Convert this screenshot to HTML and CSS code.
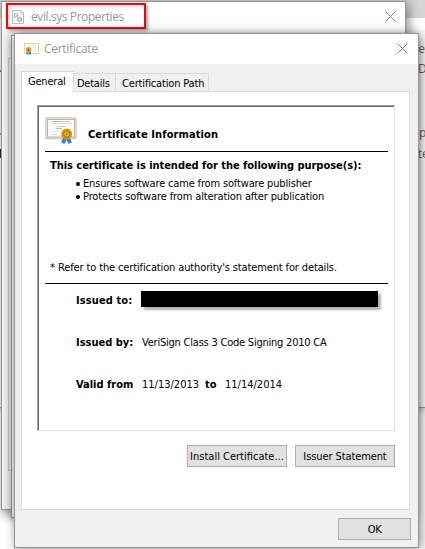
FILE: index.html
```html
<!DOCTYPE html>
<html lang="en">
<head>
<meta charset="utf-8">
<title>Certificate</title>
<link rel="stylesheet" href="styles.css">
</head>
<body>
<div class="desktop">
  <div class="backdrop">
    <div class="backdrop-bar"></div>
    <div class="peek peek-a">te</div>
    <div class="peek peek-b">D</div>
    <div class="peek peek-c">p</div>
    <div class="peek peek-d">ate</div>
    <i class="edge-mark blue"></i><i class="edge-mark green"></i><i class="edge-mark dark"></i>
  </div>

  <section class="window properties">
    <header class="titlebar">
      <svg class="file-icon" viewBox="0 0 12 14">
        <path d="M.5.5H9L11.5 3v10.500H.5z" fill="#f6f6f6" stroke="#bbb"/>
        <path d="M9 .5V3h2.500" fill="none" stroke="#bbb"/>
        <circle cx="3.800" cy="5.500" r="1.700" fill="#e4e6e8" stroke="#a3abb3" stroke-width="1.300" stroke-dasharray="1.300 .4"/>
        <circle cx="7.500" cy="9.300" r="1.900" fill="#e4e6e8" stroke="#a3abb3" stroke-width="1.500" stroke-dasharray="1.500 .4"/>
      </svg>
      <span class="props-title">evil.sys Properties</span>
      <svg class="close" viewBox="0 0 11 11"><path d="M.5.5l10 10M10.500.5l-10 10"/></svg>
    </header>
    <div class="props-page"></div>
    <div class="highlight"></div>
  </section>

  <section class="window signature"></section>

  <section class="window certificate">
    <header class="titlebar">
      <svg class="cert-small" viewBox="0 0 15 12">
        <rect x=".5" y=".5" width="14" height="10" fill="#fbfaf7" stroke="#e6cfa4"/>
        <path d="M3 3h4M8 3h4M8 5h4M8 7h3" stroke="#e8e8ec" fill="none"/>
        <path d="M2.500 8h2v4l-1-.7-1 .7zM5 8h2v4l-1-.7-1 .7z" fill="#3f7fe0"/>
        <circle cx="4.600" cy="6.800" r="2.700" fill="#d9a21c"/>
        <circle cx="4.600" cy="6.800" r="1.200" fill="#b5800e"/>
      </svg>
      <span class="cert-title">Certificate</span>
      <svg class="close" viewBox="0 0 11 11"><path d="M.5.5l10 10M10.500.5l-10 10"/></svg>
    </header>
    <div class="client">
      <nav class="tabs">
        <span class="tab active">General</span><span class="tab details">Details</span><span class="tab path">Certification Path</span>
      </nav>
      <main class="page">
        <div class="sheet">
          <div class="heading">
            <svg class="cert-large" viewBox="0 0 32 28">
              <rect x=".5" y=".5" width="31" height="21.500" rx="1" fill="#e6dccd" stroke="#cfc3b0" stroke-dasharray="1.500 .7"/>
              <rect x="2.500" y="2.500" width="27" height="17.500" fill="#fcfcfc" stroke="#beb2a2"/>
              <path d="M7 4.500h18M12 9.500h8M11 11.500h6" stroke="#bcbcd4" fill="none"/>
              <path d="M5 6.500h22M6 14.500h7M6 17.500h6" stroke="#dcdde6" fill="none"/>
              <path d="M18 21l-2 5 2-.5 1 2.300 3-6zM25 21l2 5-2-.5-1 2.300-3-6z" fill="#2f79e0"/>
              <circle cx="21.700" cy="17" r="5.500" fill="#d99a08"/>
              <circle cx="21.700" cy="17" r="3.200" fill="#e9b22a" stroke="#aa7404"/>
              <path d="M20.300 18.300l2.500-2.500" stroke="#8f6200"/>
            </svg>
            <strong class="t-info">Certificate Information</strong>
          </div>
          <div class="purpose">
            <strong class="t-purpose">This certificate is intended for the following purpose(s):</strong>
            <ul>
              <li><span class="t-ensure">Ensures software came from software publisher</span></li>
              <li><span class="t-protect">Protects software from alteration after publication</span></li>
            </ul>
            <p class="note"><span class="star">*</span><span class="t-refer">Refer to the certification authority's statement for details.</span></p>
          </div>
          <div class="facts">
            <div class="row"><strong class="t-to">Issued to:</strong><span class="redacted"></span></div>
            <div class="row"><strong class="t-by">Issued by:</strong><span class="issuer">VeriSign Class 3 Code Signing 2010 CA</span></div>
            <div class="row"><strong class="t-valid">Valid from</strong><span class="date">11/13/2013</span><strong class="until">to</strong><span class="date">11/14/2014</span></div>
          </div>
        </div>
        <div class="actions">
          <button class="t-install">Install Certificate...</button>
          <button class="t-statement">Issuer Statement</button>
        </div>
      </main>
      <footer><button class="ok">OK</button></footer>
    </div>
  </section>
</div>
</body>
</html>
```

FILE: styles.css
```css
* { box-sizing: border-box; }
body { margin: 0; font: 11px/13px "DejaVu Sans Condensed", "DejaVu Sans", sans-serif; font-stretch: condensed; color: #000; }
.desktop { position: relative; width: 425px; height: 549px; overflow: hidden; background: #fff; }
strong { font-weight: 700; }
svg { display: block; flex: none; }
span, strong { white-space: nowrap; }

.backdrop { position: absolute; inset: 0 0 auto; height: 408px; border-bottom: 1px solid #999; box-shadow: 0 2px 8px rgba(0,0,0,.3); }
.backdrop-bar { height: 18px; background: #d5d5d5; }
.peek { position: absolute; font: 12px/16px "Open Sans", sans-serif; color: #666; }
.peek-a { left: 414px; top: 41px; }
.peek-b { left: 418px; top: 61px; }
.peek-c { left: 419px; top: 125px; }
.peek-d { left: 411px; top: 146px; }
.edge-mark { position: absolute; left: 0; width: 1px; height: 2px; }
.blue { top: 70px; background: #1aa5e8; }
.green { top: 133px; background: #8ab79b; }
.dark { top: 149px; height: 9px; background: #423; }

.window { position: absolute; border: 1px solid #969696; background: #f0f0f0; }
.properties { left: 1px; top: 1px; width: 405px; height: 509px; box-shadow: 2px 3px 10px 1px rgba(0,0,0,.42); }
.signature { left: 11px; top: 35px; width: 405px; height: 483px; box-shadow: 0 2px 8px rgba(0,0,0,.3); }
.certificate { left: 14px; top: 33px; width: 405px; height: 515px; box-shadow: 2px 1px 10px rgba(0,0,0,.48); }

.titlebar { display: flex; align-items: center; height: 30px; background: #fff; font: 12px/16px "Open Sans", sans-serif; color: #999; }
.close { width: 11px; height: 11px; margin: 0 0 1px auto; fill: none; stroke: #858585; stroke-width: 1; }
.properties .titlebar { padding: 0 9px 0 10px; }
.file-icon { width: 12px; height: 14px; margin-bottom: 1px; }
.props-title { margin-left: 7px; letter-spacing: -.41px; }
.props-page { margin: 26px 6px 0; height: 413px; border: 1px solid #c8c8c8; background: #f5f5f5; }
.highlight { position: absolute; left: 4px; top: 1px; width: 140px; height: 26px; border: 2px solid #f5050a; box-shadow: 2px 2px 3px rgba(0,0,0,.35), inset 2px 2px 3px rgba(0,0,0,.15); }

.certificate .titlebar { padding: 0 10px 0 9px; }
.cert-small { width: 15px; height: 12px; }
.cert-title { margin-left: 5px; letter-spacing: -.3px; }
.client { padding: 7px 8px 0 6px; }
.tabs { display: flex; align-items: flex-end; height: 20px; }
.tab { height: 18px; padding: 3px 0 0 4px; border: 1px solid #d9d9d9; border-bottom: 0; border-left: 0; background: #f0f0f0; }
.tab.active { position: relative; z-index: 1; width: 53px; height: 21px; margin-bottom: -1px; padding: 3px 0 0 6px; border-left: 1px solid #d9d9d9; background: #fff; letter-spacing: -.2px; }
.tab.details { width: 42px; padding-left: 3px; letter-spacing: -.25px; }
.tab.path { width: 93px; padding-left: 6px; letter-spacing: -.16px; }
.page { width: 389px; height: 419px; padding: 13px 14px 0 15px; border: 1px solid #dcdcdc; background: #fff; }
.sheet { width: 358px; height: 326px; padding: 1px 6px 0 7px; border: 1px solid #e0e0e0; border-top-color: #a0a0a0; border-left-color: #a0a0a0; box-shadow: inset 1px 1px #696969; }
.heading { display: flex; height: 45px; padding-top: 10px; border-bottom: 1px solid #000; }
.cert-large { width: 32px; height: 28px; }
.t-info { margin: 11px 0 0 11px; letter-spacing: .1px; }
.purpose { height: 132px; padding: 7px 0 0 5px; border-bottom: 1px solid #000; }
.t-purpose { display: block; letter-spacing: -.04px; }
ul { margin: 5px 0 0; padding: 0 0 0 26px; list-style: none; }
li { display: flex; align-items: center; height: 13px; }
li::before { content: ""; width: 4px; height: 4px; margin-right: 3px; border-radius: 50%; background: #000; }
.t-ensure { letter-spacing: -.16px; }
.t-protect { letter-spacing: -.12px; }
.t-refer { letter-spacing: -.13px; }
.note { display: flex; margin: 58px 0 0; }
.star { width: 8px; }
.facts { padding: 7px 0 0 31px; }
.row { display: flex; height: 42px; }
.row strong:first-child { width: 66px; }
.row > * { padding-top: 3px; }
.t-to { letter-spacing: .1px; }
.issuer { letter-spacing: -.22px; }
.redacted { width: 237px; height: 16px; margin-left: -1px; background: #000; box-shadow: 3px 3px 2px rgba(0,0,0,.3); }
.date { width: 63px; }
.until { width: 20px; }
.actions { display: flex; gap: 8px; justify-content: flex-end; margin-top: 14px; }
button { width: 100px; height: 22px; padding: 0; border: 1px solid #adadad; background: #e1e1e1; font: inherit; color: #000; white-space: nowrap; }
.t-statement { letter-spacing: -.1px; }
footer { display: flex; justify-content: flex-end; padding-top: 8px; margin-right: -1px; }
.ok { width: 73px; letter-spacing: -.3px; }
```
